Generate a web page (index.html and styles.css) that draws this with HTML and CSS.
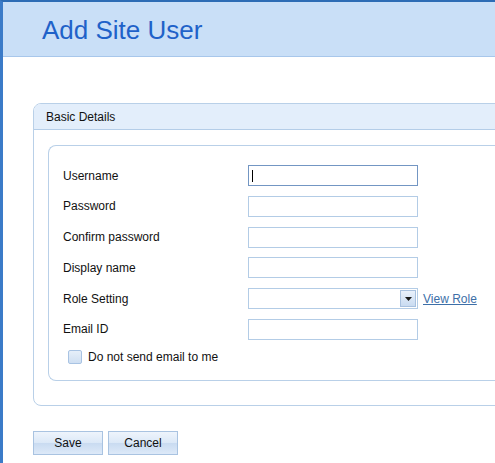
FILE: index.html
```html
<!DOCTYPE html>
<html>
<head>
<meta charset="utf-8">
<link rel="stylesheet" href="styles.css">
</head>
<body>
<div class="page">
  <div class="topbar">
    <h1 class="title">Add Site User</h1>
  </div>
  <div class="content">
    <div class="panel">
      <div class="panel-head">Basic Details</div>
      <div class="panel-body">
        <div class="inner">
          <div class="form">
            <label class="lbl">Username</label>
            <div class="field focused"><input class="txt" type="text"><span class="caret"></span></div>
            <label class="lbl">Password</label>
            <div class="field"><input class="txt" type="password"></div>
            <label class="lbl">Confirm password</label>
            <div class="field"><input class="txt" type="password"></div>
            <label class="lbl">Display name</label>
            <div class="field"><input class="txt" type="text"></div>
            <label class="lbl">Role Setting</label>
            <div class="field row">
              <div class="select"><span class="dd"><svg width="7" height="4" viewBox="0 0 7 4"><path d="M0 0H7L3.5 4Z" fill="#1a1a1a"/></svg></span></div>
              <a class="link" href="#">View Role</a>
            </div>
            <label class="lbl">Email ID</label>
            <div class="field"><input class="txt" type="text"></div>
          </div>
          <div class="check">
            <span class="box"></span>
            <span class="check-lbl">Do not send email to me</span>
          </div>
        </div>
      </div>
    </div>
    <div class="buttons">
      <button class="btn">Save</button>
      <button class="btn">Cancel</button>
    </div>
  </div>
</div>
</body>
</html>
```

FILE: styles.css
```css
html, body {
  margin: 0;
  padding: 0;
  background: #fff;
  overflow: hidden;
}
body {
  font-family: "Liberation Sans", Arial, sans-serif;
  font-size: 12px;
  color: #111;
}
.page {
  width: 495px;
  height: 463px;
  box-sizing: border-box;
  border-left: 3px solid #3b7bc8;
  border-top: 2px solid #2d6cb5;
  overflow: hidden;
}
.topbar {
  height: 54px;
  background: #c9dff7;
  border-bottom: 1px solid #a8c7eb;
  display: flex;
  align-items: center;
  padding-left: 39px;
}
.title {
  margin: 0;
  font-weight: normal;
  font-size: 26px;
  color: #1f62c9;
  line-height: 1;
  padding-top: 2px;
}
.content {
  padding: 46px 0 0 30px;
}
.panel {
  width: 500px;
  border: 1px solid #b9d0e8;
  border-radius: 8px 0 0 8px;
  overflow: hidden;
}
.panel-head {
  height: 25px;
  background: #e3eefb;
  border-bottom: 1px solid #b4cde8;
  display: flex;
  align-items: center;
  padding-left: 12px;
  color: #111;
}
.panel-body {
  padding: 15px 0 24px 14px;
}
.inner {
  border: 1px solid #b9d0e8;
  border-right: none;
  border-radius: 8px 0 0 8px;
  padding: 19px 0 15px 14px;
}
.form {
  display: grid;
  grid-template-columns: 185px 1fr;
  grid-auto-rows: 21px;
  row-gap: 9.8px;
  align-items: center;
}
.lbl {
  color: #111;
}
.field {
  position: relative;
  height: 21px;
  display: flex;
  align-items: center;
}
.txt {
  width: 170px;
  height: 21px;
  box-sizing: border-box;
  border: 1px solid #b3cce6;
  margin: 0;
  padding: 0 3px;
  font: inherit;
  outline: none;
  background: #fff;
}
.focused .txt {
  border-color: #7396c3;
}
.caret {
  position: absolute;
  left: 4px;
  top: 5px;
  width: 1px;
  height: 12px;
  background: #000;
}
.select {
  width: 170px;
  height: 21px;
  box-sizing: border-box;
  border: 1px solid #b3cce6;
  background: #fff;
  display: flex;
  justify-content: flex-end;
  align-items: center;
  padding-right: 1px;
}
.dd {
  width: 16px;
  height: 17px;
  box-sizing: border-box;
  border: 1px solid #a8c1df;
  background: linear-gradient(#e9f1fb, #c9dbf1);
  display: flex;
  align-items: center;
  justify-content: center;
}
.link {
  margin-left: 5px;
  color: #3d6fa8;
  text-decoration: underline;
}
.check {
  display: flex;
  align-items: center;
  margin-top: 9px;
  padding-left: 5px;
  height: 16px;
}
.box {
  width: 12px;
  height: 12px;
  border: 1px solid #a8c3e3;
  border-radius: 2px;
  background: linear-gradient(#e6eff9, #cfdff2);
}
.check-lbl {
  margin-left: 6px;
}
.buttons {
  display: flex;
  gap: 5px;
  margin-top: 25px;
}
.btn {
  width: 70px;
  height: 24px;
  border: 1px solid #a9c3e1;
  background: linear-gradient(#eef4fc 0%, #dbe8f7 50%, #c9dbf1 51%, #dde9f8 100%);
  font: inherit;
  color: #111;
  padding: 0;
  border-radius: 0;
}
```
